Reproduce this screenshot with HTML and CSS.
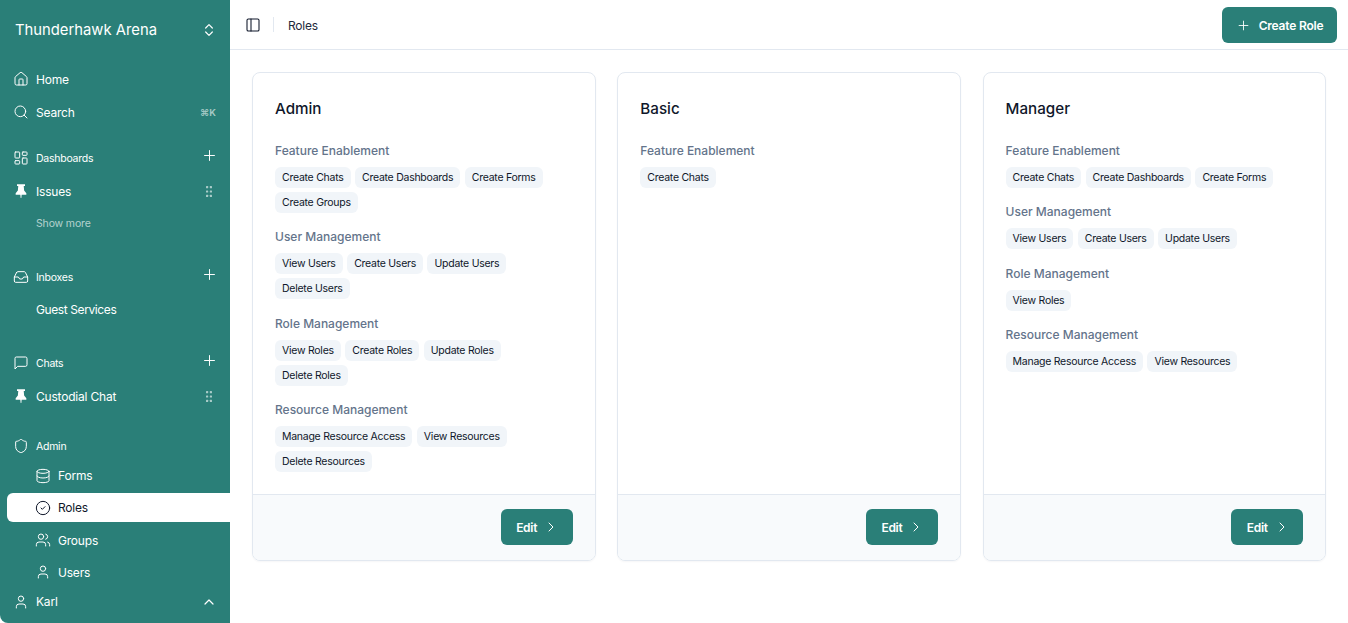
FILE: index.html
```html
<!DOCTYPE html>
<html lang="en">
<head>
<meta charset="utf-8">
<title>Roles</title>
<link rel="stylesheet" href="styles.css">
</head>
<body>
<svg class="sprite" xmlns="http://www.w3.org/2000/svg">
  <symbol id="i-house" viewBox="0 0 24 24"><path d="M15 21v-8a1 1 0 0 0-1-1h-4a1 1 0 0 0-1 1v8"/><path d="M3 10a2 2 0 0 1 .709-1.528l7-5.999a2 2 0 0 1 2.582 0l7 5.999A2 2 0 0 1 21 10v9a2 2 0 0 1-2 2H5a2 2 0 0 1-2-2z"/></symbol>
  <symbol id="i-search" viewBox="0 0 24 24"><circle cx="11" cy="11" r="8"/><path d="m21 21-4.3-4.3"/></symbol>
  <symbol id="i-dash" viewBox="0 0 24 24"><rect x="3" y="3" width="7" height="9" rx="1"/><rect x="14" y="3" width="7" height="5" rx="1"/><rect x="14" y="12" width="7" height="9" rx="1"/><rect x="3" y="16" width="7" height="5" rx="1"/></symbol>
  <symbol id="i-inbox" viewBox="0 0 24 24"><polyline points="22 12 16 12 14 15 10 15 8 12 2 12"/><path d="M5.45 5.11 2 12v6a2 2 0 0 0 2 2h16a2 2 0 0 0 2-2v-6l-3.45-6.89A2 2 0 0 0 16.76 4H7.24a2 2 0 0 0-1.79 1.11z"/></symbol>
  <symbol id="i-chat" viewBox="0 0 24 24"><path d="M21 15a2 2 0 0 1-2 2H7l-4 4V5a2 2 0 0 1 2-2h14a2 2 0 0 1 2 2z"/></symbol>
  <symbol id="i-shield" viewBox="0 0 24 24"><path d="M20 13c0 5-3.5 7.5-7.66 8.95a1 1 0 0 1-.67-.01C7.5 20.5 4 18 4 13V6a1 1 0 0 1 1-1c2 0 4.5-1.2 6.24-2.72a1.17 1.17 0 0 1 1.52 0C14.51 3.81 17 5 19 5a1 1 0 0 1 1 1z"/></symbol>
  <symbol id="i-db" viewBox="0 0 24 24"><ellipse cx="12" cy="5" rx="9" ry="3"/><path d="M3 5V19A9 3 0 0 0 21 19V5"/><path d="M3 12A9 3 0 0 0 21 12"/></symbol>
  <symbol id="i-check" viewBox="0 0 24 24"><circle cx="12" cy="12" r="10"/><path d="m9 12 2 2 4-4"/></symbol>
  <symbol id="i-users" viewBox="0 0 24 24"><path d="M16 21v-2a4 4 0 0 0-4-4H6a4 4 0 0 0-4 4v2"/><circle cx="9" cy="7" r="4"/><path d="M22 21v-2a4 4 0 0 0-3-3.87"/><path d="M16 3.13a4 4 0 0 1 0 7.75"/></symbol>
  <symbol id="i-user" viewBox="0 0 24 24"><path d="M19 21v-2a4 4 0 0 0-4-4H9a4 4 0 0 0-4 4v2"/><circle cx="12" cy="7" r="4"/></symbol>
  <symbol id="i-panel" viewBox="0 0 24 24"><rect x="3" y="3" width="18" height="18" rx="2"/><path d="M9 3v18"/></symbol>
  <symbol id="i-updown" viewBox="0 0 24 24"><path d="m7 15 5 5 5-5"/><path d="m7 9 5-5 5 5"/></symbol>
  <symbol id="i-right" viewBox="0 0 24 24"><path d="m9 18 6-6-6-6"/></symbol>
  <symbol id="i-up" viewBox="0 0 24 24"><path d="m18 15-6-6-6 6"/></symbol>
  <symbol id="i-plus" viewBox="0 0 24 24"><path d="M5 12h14"/><path d="M12 5v14"/></symbol>
  <symbol id="i-pin" viewBox="0 0 24 24"><path class="solid" d="M6 2h12v2.4h-1.9l.6 7 3.3 3.8v2.3h-7l-.5 5h-1l-.5-5H4v-2.3l3.3-3.8.6-7H6z"/></symbol>
  <symbol id="i-grip" viewBox="0 0 6 11"><g class="solid"><rect x="0" y="0" width="2.2" height="2.2" rx=".5"/><rect x="3.8" y="0" width="2.2" height="2.2" rx=".5"/><rect x="0" y="4.4" width="2.2" height="2.2" rx=".5"/><rect x="3.8" y="4.4" width="2.2" height="2.2" rx=".5"/><rect x="0" y="8.8" width="2.2" height="2.2" rx=".5"/><rect x="3.8" y="8.8" width="2.2" height="2.2" rx=".5"/></g></symbol>
</svg>

<div class="app">
  <aside class="sidebar">
    <div class="brand">
      <span class="brand-name">Thunderhawk Arena</span>
      <svg class="icon icon-updown"><use href="#i-updown"/></svg>
    </div>

    <nav class="nav-top">
      <a class="row"><svg class="icon"><use href="#i-house"/></svg><span>Home</span></a>
      <a class="row"><svg class="icon"><use href="#i-search"/></svg><span>Search</span><kbd class="kbd">⌘K</kbd></a>
    </nav>

    <section class="group group-dash">
      <div class="group-head"><svg class="icon"><use href="#i-dash"/></svg><span>Dashboards</span><svg class="icon-add"><use href="#i-plus"/></svg></div>
      <a class="row"><svg class="icon"><use href="#i-pin"/></svg><span>Issues</span><svg class="icon-grip"><use href="#i-grip"/></svg></a>
      <a class="row row-more"><span>Show more</span></a>
    </section>

    <section class="group">
      <div class="group-head head-tight"><svg class="icon"><use href="#i-inbox"/></svg><span>Inboxes</span><svg class="icon-add"><use href="#i-plus"/></svg></div>
      <a class="row row-plain"><span>Guest Services</span></a>
    </section>

    <section class="group">
      <div class="group-head"><svg class="icon"><use href="#i-chat"/></svg><span>Chats</span><svg class="icon-add"><use href="#i-plus"/></svg></div>
      <a class="row"><svg class="icon"><use href="#i-pin"/></svg><span>Custodial Chat</span><svg class="icon-grip"><use href="#i-grip"/></svg></a>
    </section>

    <section class="group group-admin">
      <div class="group-head head-admin"><svg class="icon"><use href="#i-shield"/></svg><span>Admin</span></div>
      <div class="subnav">
        <a class="sub"><svg class="icon"><use href="#i-db"/></svg><span>Forms</span></a>
        <a class="sub sub-active"><svg class="icon"><use href="#i-check"/></svg><span>Roles</span></a>
        <a class="sub"><svg class="icon"><use href="#i-users"/></svg><span>Groups</span></a>
        <a class="sub"><svg class="icon"><use href="#i-user"/></svg><span>Users</span></a>
      </div>
    </section>

    <div class="account">
      <svg class="icon"><use href="#i-user"/></svg><span>Karl</span><svg class="icon-up"><use href="#i-up"/></svg>
    </div>
  </aside>

  <main class="main">
    <header class="topbar">
      <svg class="icon-panel"><use href="#i-panel"/></svg>
      <span class="divider"></span>
      <span class="crumb">Roles</span>
      <button class="btn btn-create"><svg class="icon-btn"><use href="#i-plus"/></svg>Create Role</button>
    </header>

    <div class="cards">
      <article class="card">
        <div class="card-body">
          <h2 class="card-title">Admin</h2>
          <div class="sec">
            <h3 class="sec-title">Feature Enablement</h3>
            <div class="chips"><span class="chip">Create Chats</span><span class="chip">Create Dashboards</span><span class="chip">Create Forms</span><span class="chip">Create Groups</span></div>
          </div>
          <div class="sec">
            <h3 class="sec-title">User Management</h3>
            <div class="chips"><span class="chip">View Users</span><span class="chip">Create Users</span><span class="chip">Update Users</span><span class="chip">Delete Users</span></div>
          </div>
          <div class="sec">
            <h3 class="sec-title">Role Management</h3>
            <div class="chips"><span class="chip">View Roles</span><span class="chip">Create Roles</span><span class="chip">Update Roles</span><span class="chip">Delete Roles</span></div>
          </div>
          <div class="sec">
            <h3 class="sec-title">Resource Management</h3>
            <div class="chips"><span class="chip">Manage Resource Access</span><span class="chip">View Resources</span><span class="chip">Delete Resources</span></div>
          </div>
        </div>
        <footer class="card-foot"><button class="btn btn-edit">Edit<svg class="icon-chev"><use href="#i-right"/></svg></button></footer>
      </article>

      <article class="card">
        <div class="card-body">
          <h2 class="card-title">Basic</h2>
          <div class="sec">
            <h3 class="sec-title">Feature Enablement</h3>
            <div class="chips"><span class="chip">Create Chats</span></div>
          </div>
        </div>
        <footer class="card-foot"><button class="btn btn-edit">Edit<svg class="icon-chev"><use href="#i-right"/></svg></button></footer>
      </article>

      <article class="card">
        <div class="card-body">
          <h2 class="card-title">Manager</h2>
          <div class="sec">
            <h3 class="sec-title">Feature Enablement</h3>
            <div class="chips"><span class="chip">Create Chats</span><span class="chip">Create Dashboards</span><span class="chip">Create Forms</span></div>
          </div>
          <div class="sec">
            <h3 class="sec-title">User Management</h3>
            <div class="chips"><span class="chip">View Users</span><span class="chip">Create Users</span><span class="chip">Update Users</span></div>
          </div>
          <div class="sec">
            <h3 class="sec-title">Role Management</h3>
            <div class="chips"><span class="chip">View Roles</span></div>
          </div>
          <div class="sec">
            <h3 class="sec-title">Resource Management</h3>
            <div class="chips"><span class="chip">Manage Resource Access</span><span class="chip">View Resources</span></div>
          </div>
        </div>
        <footer class="card-foot"><button class="btn btn-edit">Edit<svg class="icon-chev"><use href="#i-right"/></svg></button></footer>
      </article>
    </div>
  </main>
</div>
</body>
</html>
```

FILE: styles.css
```css
* { box-sizing: border-box; }
html, body { margin: 0; height: 100%; background: #fff; overflow: hidden; }
body { font-family: Inter, "Noto Sans", sans-serif; color: #0f172a; font-size: 12px; }
.sprite { display: none; }
svg { fill: none; stroke: currentColor; stroke-width: 2; stroke-linecap: round; stroke-linejoin: round; flex: none; }
.solid { fill: currentColor; stroke: none; }

.app { display: flex; height: 623px; }

/* sidebar */
.sidebar { width: 230px; flex: none; height: 100%; background: #2a7f78; color: #fff; display: flex; flex-direction: column; border-bottom-left-radius: 8px; overflow: hidden; }
.brand { height: 59px; flex: none; display: flex; align-items: center; justify-content: space-between; padding: 0 13px 0 15px; }
.brand-name { font-size: 14.8px; font-weight: 400; }
.icon { width: 16px; height: 16px; stroke-width: 1.5; }
.icon-updown { width: 16px; height: 16px; stroke-width: 1.8; }
.nav-top { margin-top: 4px; display: flex; flex-direction: column; gap: 1px; }
.row { height: 32px; display: flex; align-items: center; gap: 7px; padding: 0 14px 0 13px; font-size: 12px; letter-spacing: -.2px; }
.row > span { flex: 1; }
.row-more { padding-left: 36px; font-size: 10.5px; letter-spacing: -.15px; color: rgba(255,255,255,.65); }
.row-plain { padding-left: 36px; letter-spacing: -.4px; }
.kbd { font: 600 9.5px Inter, sans-serif; letter-spacing: 0; color: rgba(255,255,255,.6); }
.group { margin-top: 26px; }
.group-dash { margin-top: 18px; }
.group-admin { margin-top: 22px; }
.group-head { height: 24px; margin-bottom: 5px; display: flex; align-items: center; gap: 7px; padding: 0 12px 0 13px; font-size: 10.5px; letter-spacing: -.25px; }
.group-head > span { flex: 1; }
.group-head .icon-add { margin-top: -6px; }
.head-tight { margin-bottom: 4px; }
.head-admin { margin-bottom: 3px; }
.icon-add { width: 17px; height: 17px; stroke-width: 1.4; }
.icon-grip { width: 6px; height: 11px; margin-right: 4px; color: rgba(255,255,255,.6); }
.subnav { display: flex; flex-direction: column; gap: 3.33px; margin-left: 7px; }
.sub { height: 29px; display: flex; align-items: center; gap: 7px; padding-left: 28px; font-size: 12px; letter-spacing: -.2px; }
.sub-active { background: #fff; color: #0f172a; border-radius: 6px 0 0 6px; }
.account { height: 24px; margin-top: 3px; display: flex; align-items: center; gap: 7px; padding: 0 13px; font-size: 12px; letter-spacing: -.2px; }
.account > span { flex: 1; }
.icon-up { width: 16px; height: 16px; stroke-width: 1.8; }

/* main */
.main { flex: 1; min-width: 0; display: flex; flex-direction: column; }
.topbar { height: 50px; flex: none; border-bottom: 1px solid #e2e8f0; display: flex; align-items: center; padding: 0 11px 0 15px; }
.icon-panel { width: 16px; height: 16px; stroke-width: 1.6; color: #0f172a; }
.divider { width: 1px; height: 15px; background: #e2e8f0; margin: 0 14px 0 12px; }
.crumb { flex: 1; font-size: 12px; letter-spacing: -.2px; padding-top: 1px; color: #1e293b; }
.btn { border: 0; background: #2a7f78; color: #fff; border-radius: 6px; font: 600 12px Inter, sans-serif; display: inline-flex; align-items: center; justify-content: center; height: 36px; padding: 1px 0 0; }
.btn-create { width: 115px; gap: 8px; letter-spacing: -.2px; }
.icon-btn { width: 15px; height: 15px; stroke-width: 1.4; }
.btn-edit { width: 72px; gap: 6px; padding-left: 2px; letter-spacing: -.3px; }
.icon-chev { width: 16px; height: 16px; stroke-width: 1.5; }

.cards { display: grid; grid-template-columns: repeat(3, 1fr); gap: 21.7px; padding: 22px 21.8px 22px 22px; align-items: stretch; }
.card { border: 1px solid #e2e8f0; border-radius: 8px; display: flex; flex-direction: column; overflow: hidden; box-shadow: 0 1px 2px rgba(15,23,42,.04); }
.card-body { flex: 1; padding: 24px 22px 22px; }
.card-title { margin: 0 0 22px; font-size: 15.2px; line-height: 24px; font-weight: 550; color: #0f172a; }
.sec + .sec { margin-top: 16.4px; }
.sec-title { margin: 0 0 8px; font-size: 12px; line-height: 16px; font-weight: 500; color: #64748b; }
.chips { display: flex; flex-wrap: wrap; gap: 4px 4.5px; }
.chip { height: 21px; line-height: 21px; padding: 0 7px; background: #f1f5f9; border-radius: 6px; font-size: 10.5px; letter-spacing: -.26px; color: #0f172a; }
.card-foot { height: 66px; flex: none; border-top: 1px solid #e2e8f0; background: #f8fafc; display: flex; align-items: center; justify-content: flex-end; padding: 0 22px 2px; }
```
